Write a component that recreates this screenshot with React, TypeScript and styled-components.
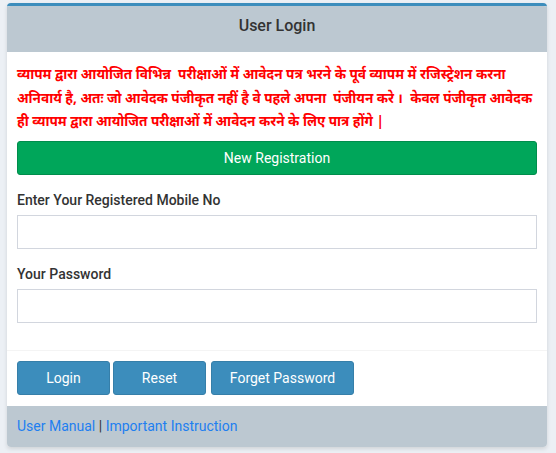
import React from 'react';
import styled, { createGlobalStyle } from 'styled-components';

const GlobalStyle = createGlobalStyle`
  * { box-sizing: border-box; }
  body {
    margin: 0;
    background: #ecf0f5;
    font-family: Roboto, "Liberation Sans", Arial, sans-serif;
  }
`;

const Page = styled.div`
  padding: 3px 9px 7px 7px;
`;

const Box = styled.div`
  background: #fff;
  border-top: 3px solid #3c8dbc;
  border-radius: 4px;
  box-shadow: 0 2px 4px rgba(0, 0, 0, 0.12);
  overflow: hidden;
`;

const BoxHeader = styled.div`
  height: 46px;
  background: #bcc8d1;
  padding-top: 10px;
  text-align: center;
`;

const Title = styled.h3`
  margin: 0;
  font-size: 16px;
  line-height: 20px;
  font-weight: 500;
  color: #333;
`;

const BoxBody = styled.div`
  padding: 10px 10px 12px;
`;

const Notice = styled.p`
  margin: 0 0 8px;
  color: #f00;
  font-size: 13.6px;
  font-weight: 700;
  line-height: 23.5px;
  white-space: nowrap;
  font-family: "Noto Sans", "Noto Sans Devanagari", Lohit, sans-serif;
`;

const GreenButton = styled.button`
  display: block;
  width: 100%;
  height: 34px;
  background: #00a65a;
  border: 1px solid #008d4c;
  border-radius: 3px;
  color: #fff;
  font-family: inherit;
  font-size: 14px;
  margin-bottom: 15px;
`;

const FormGroup = styled.div`
  margin-bottom: 15px;
`;

const Label = styled.label`
  display: block;
  font-size: 14px;
  font-weight: 500;
  line-height: 20px;
  color: #333;
  margin-bottom: 5px;
`;

const Input = styled.input`
  display: block;
  width: 100%;
  height: 34px;
  border: 1px solid #d2d6de;
  padding: 6px 12px;
  font-size: 14px;
  outline: none;
`;

const ActionBar = styled.div`
  border-top: 1px solid #f4f4f4;
  padding: 10px 10px 11px;
  display: flex;
  gap: 3px;
`;

const Button = styled.button<{ $width: number; $offset?: number }>`
  width: ${(p) => p.$width}px;
  margin-left: ${(p) => p.$offset ?? 0}px;
  height: 34px;
  background: #3c8dbc;
  border: 1px solid #367fa9;
  border-radius: 3px;
  color: #fff;
  font-family: inherit;
  font-size: 14px;
`;

const BoxFooter = styled.div`
  background: #bcc8d1;
  padding: 10px;
  font-size: 14px;
  line-height: 21px;
  color: #333;
`;

const Link = styled.a`
  color: #1e7ff0;
  text-decoration: none;
`;

const App: React.FC = () => {
  return (
    <Page>
      <GlobalStyle />
      <Box>
        <BoxHeader>
          <Title>User Login</Title>
        </BoxHeader>
        <BoxBody>
          <Notice>
            व्यापम द्वारा आयोजित विभिन्न&nbsp; परीक्षाओं में आवेदन पत्र भरने के पूर्व व्यापम में रजिस्ट्रेशन करना
            <br />
            अनिवार्य है, अतः जो आवेदक पंजीकृत नहीं है वे पहले अपना&nbsp; पंजीयन करे ।&nbsp; केवल पंजीकृत आवेदक
            <br />
            ही व्यापम द्वारा आयोजित परीक्षाओं में आवेदन करने के लिए पात्र होंगे |
          </Notice>
          <GreenButton>New Registration</GreenButton>
          <FormGroup>
            <Label>Enter Your Registered Mobile No</Label>
            <Input type="text" />
          </FormGroup>
          <FormGroup>
            <Label>Your Password</Label>
            <Input type="password" />
          </FormGroup>
        </BoxBody>
        <ActionBar>
          <Button $width={93}>Login</Button>
          <Button $width={93}>Reset</Button>
          <Button $width={143} $offset={2}>Forget Password</Button>
        </ActionBar>
        <BoxFooter>
          <Link href="#">User Manual</Link> | <Link href="#">Important Instruction</Link>
        </BoxFooter>
      </Box>
    </Page>
  );
};

export default App;
